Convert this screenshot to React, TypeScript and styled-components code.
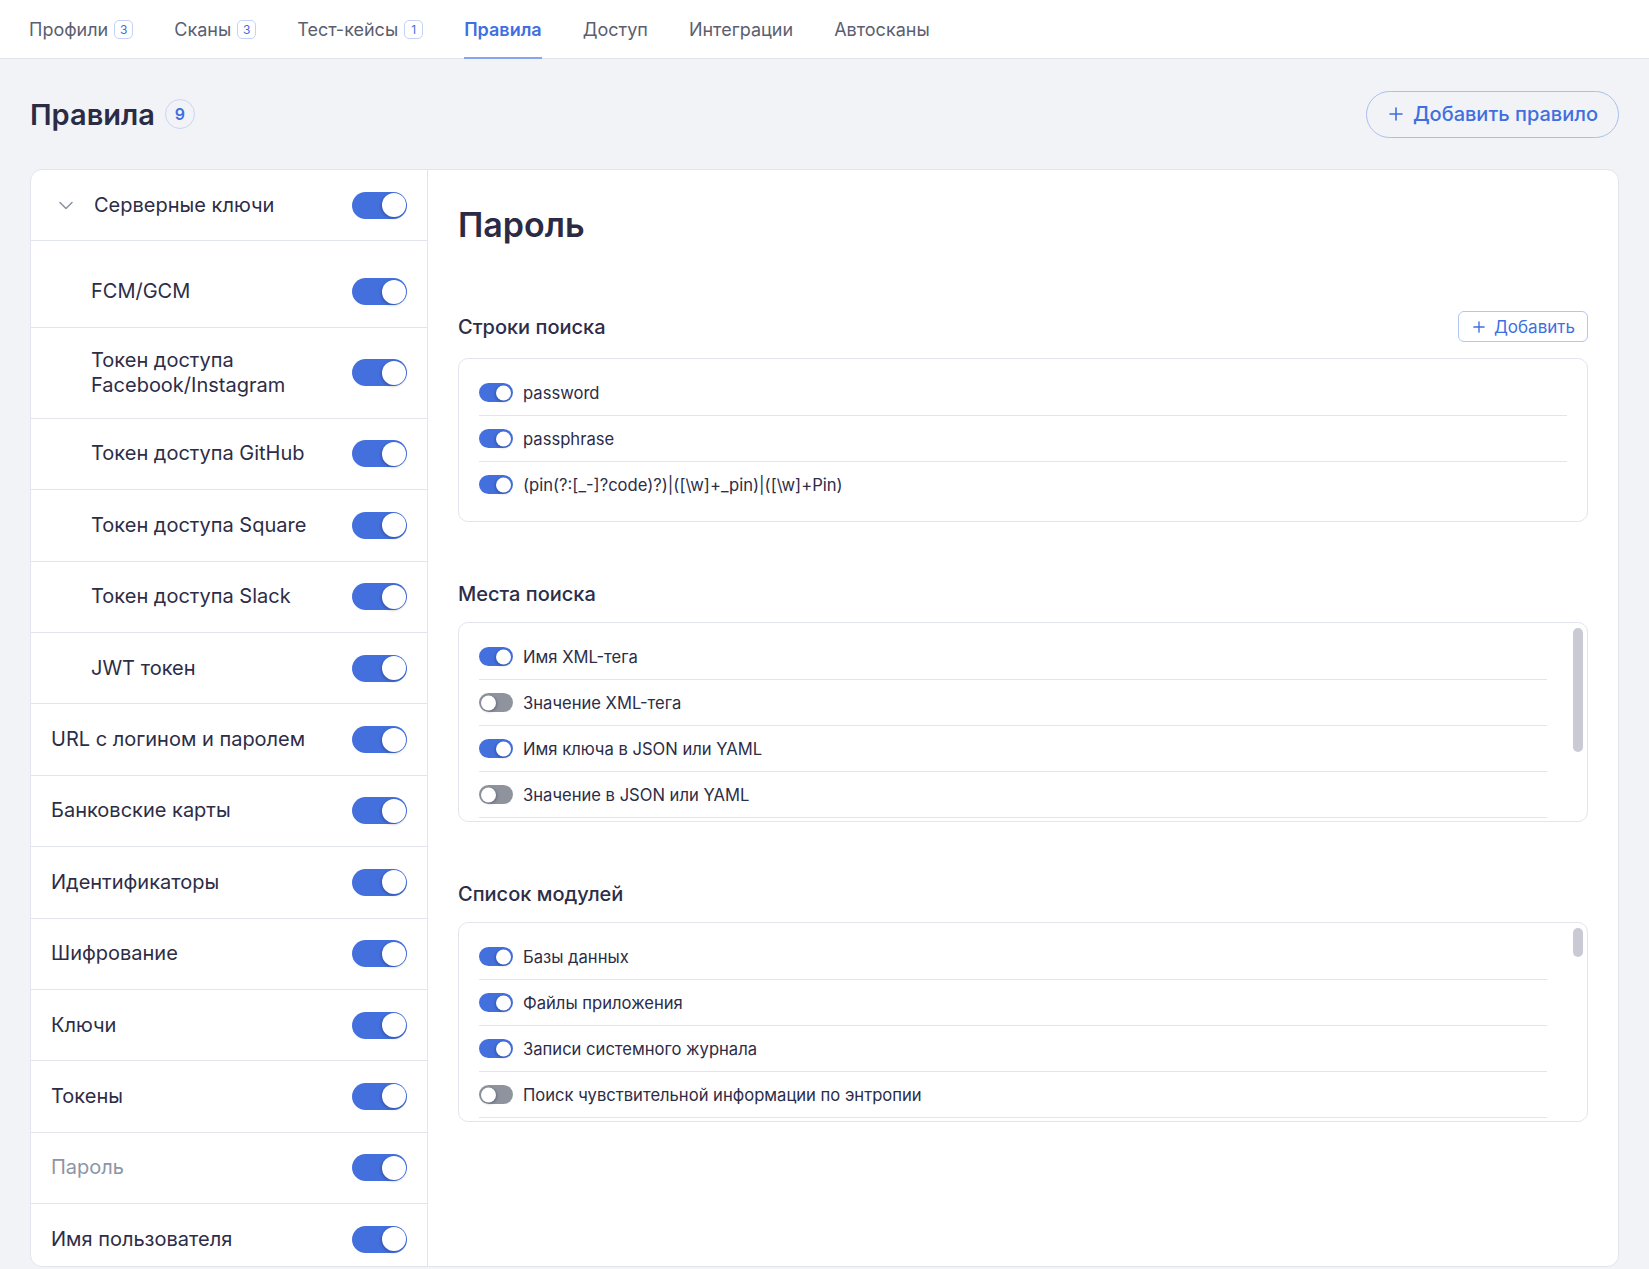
import styled, { createGlobalStyle, css } from "styled-components";

const GlobalStyle = createGlobalStyle`
  * {
    box-sizing: border-box;
  }
  body {
    margin: 0;
    background: #f2f3f6;
    font-family: Inter, "Noto Sans", sans-serif;
    color: #2d2d47;
  }
`;

const Page = styled.div`
  height: 100vh;
  display: flex;
  flex-direction: column;
`;

const TopNav = styled.nav`
  height: 59px;
  flex-shrink: 0;
  display: flex;
  gap: 41px;
  padding: 0 29px;
  background: #fff;
  border-bottom: 1px solid #e3e5eb;
`;

const Tab = styled.div<{ $active?: boolean }>`
  display: flex;
  align-items: center;
  gap: 6px;
  height: 59px;
  padding-top: 2px;
  border-bottom: 2px solid transparent;
  font-size: 18px;
  color: #5b5e70;
  ${(p) =>
    p.$active &&
    css`
      color: #3f6fe0;
      font-weight: 600;
      border-bottom-color: #86a4f0;
    `}
`;

const TabBadge = styled.span`
  display: inline-flex;
  align-items: center;
  justify-content: center;
  min-width: 19px;
  height: 19px;
  padding: 0 4px;
  border: 1px solid #c3d2f6;
  border-radius: 5px;
  font-size: 12px;
  color: #3f6fe0;
`;

const Header = styled.div`
  height: 110px;
  flex-shrink: 0;
  display: flex;
  align-items: center;
  justify-content: space-between;
  padding: 0 30px;
`;

const TitleWrap = styled.div`
  display: flex;
  align-items: center;
  gap: 10px;
`;

const PageTitle = styled.h1`
  margin: 0;
  font-size: 29px;
  font-weight: 600;
  color: #2b2b45;
`;

const CountBadge = styled.span`
  display: inline-flex;
  align-items: center;
  justify-content: center;
  width: 30px;
  height: 30px;
  border: 1px solid #c8d5f5;
  border-radius: 50%;
  font-size: 16px;
  font-weight: 600;
  color: #3f6fe0;
`;

const OutlineButton = styled.button<{ $small?: boolean }>`
  display: inline-flex;
  align-items: center;
  font-family: inherit;
  background: transparent;
  color: #3f6fe0;
  cursor: pointer;
  ${(p) =>
    p.$small
      ? css`
          height: 31px;
          gap: 9px;
          padding: 0 12px 0 14px;
          border: 1px solid #b3c6f3;
          border-radius: 6px;
          font-size: 17px;
          background: #fff;
        `
      : css`
          height: 47px;
          gap: 10px;
          padding: 0 20px 0 22px;
          border: 1px solid #a9bff2;
          border-radius: 24px;
          font-size: 20px;
          font-weight: 500;
        `}
`;

const Card = styled.div`
  flex: 1;
  min-height: 0;
  display: flex;
  margin: 0 30px 2px;
  background: #fff;
  border: 1px solid #e3e5ee;
  border-radius: 12px;
  overflow: hidden;
`;

const RuleList = styled.div`
  width: 397px;
  flex-shrink: 0;
  border-right: 1px solid #e3e5ee;
  overflow: hidden;
`;

const RuleRow = styled.div<{ $indent?: boolean; $muted?: boolean }>`
  display: flex;
  align-items: center;
  justify-content: space-between;
  gap: 16px;
  min-height: 71.4px;
  padding: 20px 20px 20px ${(p) => (p.$indent ? "60px" : "20px")};
  border-bottom: 1px solid #e3e5ee;
  font-size: 20px;
  line-height: 25px;
  color: ${(p) => (p.$muted ? "#8d95a6" : "#2d2d47")};
`;

const RuleLabel = styled.div`
  display: flex;
  align-items: center;
`;

const Chevron = styled.svg`
  width: 16px;
  height: 16px;
  margin: 0 20px 0 7px;
  flex-shrink: 0;
`;

const SubList = styled.div`
  padding-top: 15px;
`;

const Detail = styled.div`
  flex: 1;
  min-width: 0;
  padding: 34px 30px 30px 30px;
  display: flex;
  flex-direction: column;
  gap: 60px;
`;

const DetailTitle = styled.h2`
  margin: 0 0 5px;
  font-size: 34px;
  line-height: 42px;
  font-weight: 600;
  color: #2b2b45;
`;

const Section = styled.section`
  display: flex;
  flex-direction: column;
  gap: 16px;
`;

const SectionHead = styled.div`
  display: flex;
  align-items: center;
  justify-content: space-between;
  min-height: 24px;
`;

const SectionTitle = styled.h3`
  margin: 0;
  font-size: 20px;
  line-height: 24px;
  font-weight: 500;
  color: #2d2d47;
`;

const OptionBox = styled.div`
  border: 1px solid #e3e5ee;
  border-radius: 10px;
  padding: 11px 20px 14px;
`;

const ScrollBox = styled.div`
  position: relative;
  height: 200px;
  border: 1px solid #e3e5ee;
  border-radius: 10px;
  overflow: hidden;
`;

const ScrollContent = styled.div`
  padding: 11px 40px 13px 20px;
`;

const ScrollThumb = styled.div<{ $height: number }>`
  position: absolute;
  top: 5px;
  right: 4px;
  width: 10px;
  height: ${(p) => p.$height}px;
  border-radius: 5px;
  background: #c9cad3;
`;

const OptionRow = styled.div`
  display: flex;
  align-items: center;
  gap: 10px;
  height: 46px;
  border-bottom: 1px solid #e3e5ee;
  font-size: 16.6px;
  color: #2d2d47;
  &:last-child {
    border-bottom: none;
    height: 45px;
  }
`;

const Track = styled.span<{ $on: boolean; $size: "lg" | "sm" }>`
  position: relative;
  display: inline-block;
  flex-shrink: 0;
  background: ${(p) => (p.$on ? "#4470de" : "#8e939d")};
  ${(p) =>
    p.$size === "lg"
      ? css`
          width: 55px;
          height: 27px;
          border-radius: 14px;
        `
      : css`
          width: 34px;
          height: 19px;
          border-radius: 10px;
        `}
`;

const Knob = styled.span<{ $on: boolean; $size: "lg" | "sm" }>`
  position: absolute;
  top: 50%;
  transform: translateY(-50%);
  background: #fff;
  border-radius: 50%;
  box-shadow: ${(p) =>
    p.$on ? "-1px 1px 3px rgba(20, 30, 70, 0.35)" : "1px 1px 3px rgba(20, 30, 70, 0.35)"};
  ${(p) =>
    p.$size === "lg"
      ? css`
          width: 24px;
          height: 24px;
          ${p.$on ? "right: 1.5px;" : "left: 1.5px;"}
        `
      : css`
          width: 15px;
          height: 15px;
          ${p.$on ? "right: 2px;" : "left: 2px;"}
        `}
`;

function Toggle({ on = true, size = "lg" }: { on?: boolean; size?: "lg" | "sm" }) {
  return (
    <Track $on={on} $size={size}>
      <Knob $on={on} $size={size} />
    </Track>
  );
}

function PlusIcon({ size }: { size: number }) {
  return (
    <svg width={size} height={size} viewBox="0 0 14 14" fill="none">
      <path d="M7 1v12M1 7h12" stroke="currentColor" strokeWidth="1.6" strokeLinecap="round" />
    </svg>
  );
}

type Option = { name: string; on: boolean };

// visible height of a scroll list, used to size its thumb like a real scrollbar
const VISIBLE = 198;
const TRACK = 188;

function ScrollList({ items }: { items: Option[] }) {
  const contentHeight = 24 + items.length * 46 - 1;
  const thumb = Math.round((TRACK * VISIBLE) / contentHeight);
  return (
    <ScrollBox>
      <ScrollContent>
        {items.map((s) => (
          <OptionRow key={s.name}>
            <Toggle size="sm" on={s.on} />
            {s.name}
          </OptionRow>
        ))}
      </ScrollContent>
      <ScrollThumb $height={thumb} />
    </ScrollBox>
  );
}

const tabs = [
  { name: "Профили", count: 3 },
  { name: "Сканы", count: 3 },
  { name: "Тест-кейсы", count: 1 },
  { name: "Правила", active: true },
  { name: "Доступ" },
  { name: "Интеграции" },
  { name: "Автосканы" },
];

const serverKeys = [
  "FCM/GCM",
  "Токен доступа Facebook/Instagram",
  "Токен доступа GitHub",
  "Токен доступа Square",
  "Токен доступа Slack",
  "JWT токен",
];

const rules = [
  { name: "URL с логином и паролем" },
  { name: "Банковские карты" },
  { name: "Идентификаторы" },
  { name: "Шифрование" },
  { name: "Ключи" },
  { name: "Токены" },
  { name: "Пароль", muted: true },
  { name: "Имя пользователя" },
];

const searchStrings = ["password", "passphrase", "(pin(?:[_-]?code)?)|([\\w]+_pin)|([\\w]+Pin)"];

const searchPlaces: Option[] = [
  { name: "Имя XML-тега", on: true },
  { name: "Значение XML-тега", on: false },
  { name: "Имя ключа в JSON или YAML", on: true },
  { name: "Значение в JSON или YAML", on: false },
  { name: "Имя переменной в коде", on: true },
  { name: "Значение переменной в коде", on: false },
];

const modules: Option[] = [
  { name: "Базы данных", on: true },
  { name: "Файлы приложения", on: true },
  { name: "Записи системного журнала", on: true },
  { name: "Поиск чувствительной информации по энтропии", on: false },
  { name: "Shared Preferences", on: true },
  { name: "Ресурсы приложения", on: true },
  { name: "Строки в исходном коде", on: true },
  { name: "Манифест приложения", on: true },
  { name: "Сетевой трафик", on: true },
  { name: "Буфер обмена", on: false },
  { name: "Кэш приложения", on: true },
  { name: "Внешнее хранилище", on: true },
  { name: "Внутреннее хранилище", on: true },
  { name: "Content Providers", on: true },
  { name: "WebView", on: true },
  { name: "Cookies", on: true },
  { name: "Keychain", on: true },
  { name: "Plist-файлы", on: true },
  { name: "NSUserDefaults", on: true },
  { name: "Снимки экрана", on: false },
  { name: "Дампы памяти", on: true },
  { name: "Нативные библиотеки", on: true },
  { name: "Конфигурационные файлы", on: true },
  { name: "Сертификаты", on: true },
  { name: "Архивы", on: true },
  { name: "Временные файлы", on: true },
  { name: "Резервные копии", on: true },
];

export default function App() {
  return (
    <Page>
      <GlobalStyle />
      <TopNav>
        {tabs.map((t) => (
          <Tab key={t.name} $active={t.active}>
            {t.name}
            {t.count !== undefined && <TabBadge>{t.count}</TabBadge>}
          </Tab>
        ))}
      </TopNav>

      <Header>
        <TitleWrap>
          <PageTitle>Правила</PageTitle>
          <CountBadge>9</CountBadge>
        </TitleWrap>
        <OutlineButton>
          <PlusIcon size={14} />
          Добавить правило
        </OutlineButton>
      </Header>

      <Card>
        <RuleList>
          <RuleRow>
            <RuleLabel>
              <Chevron viewBox="0 0 16 16" fill="none">
                <path d="M2 5.5l6 6 6-6" stroke="#8a90a0" strokeWidth="1.5" strokeLinecap="round" strokeLinejoin="round" />
              </Chevron>
              Серверные ключи
            </RuleLabel>
            <Toggle />
          </RuleRow>
          <SubList>
            {serverKeys.map((k) => (
              <RuleRow key={k} $indent>
                <RuleLabel>{k}</RuleLabel>
                <Toggle />
              </RuleRow>
            ))}
          </SubList>
          {rules.map((r) => (
            <RuleRow key={r.name} $muted={r.muted}>
              <RuleLabel>{r.name}</RuleLabel>
              <Toggle />
            </RuleRow>
          ))}
        </RuleList>

        <Detail>
          <DetailTitle>Пароль</DetailTitle>

          <Section>
            <SectionHead>
              <SectionTitle>Строки поиска</SectionTitle>
              <OutlineButton $small>
                <PlusIcon size={12} />
                Добавить
              </OutlineButton>
            </SectionHead>
            <OptionBox>
              {searchStrings.map((s) => (
                <OptionRow key={s}>
                  <Toggle size="sm" />
                  {s}
                </OptionRow>
              ))}
            </OptionBox>
          </Section>

          <Section>
            <SectionHead>
              <SectionTitle>Места поиска</SectionTitle>
            </SectionHead>
            <ScrollList items={searchPlaces} />
          </Section>

          <Section>
            <SectionHead>
              <SectionTitle>Список модулей</SectionTitle>
            </SectionHead>
            <ScrollList items={modules} />
          </Section>
        </Detail>
      </Card>
    </Page>
  );
}
